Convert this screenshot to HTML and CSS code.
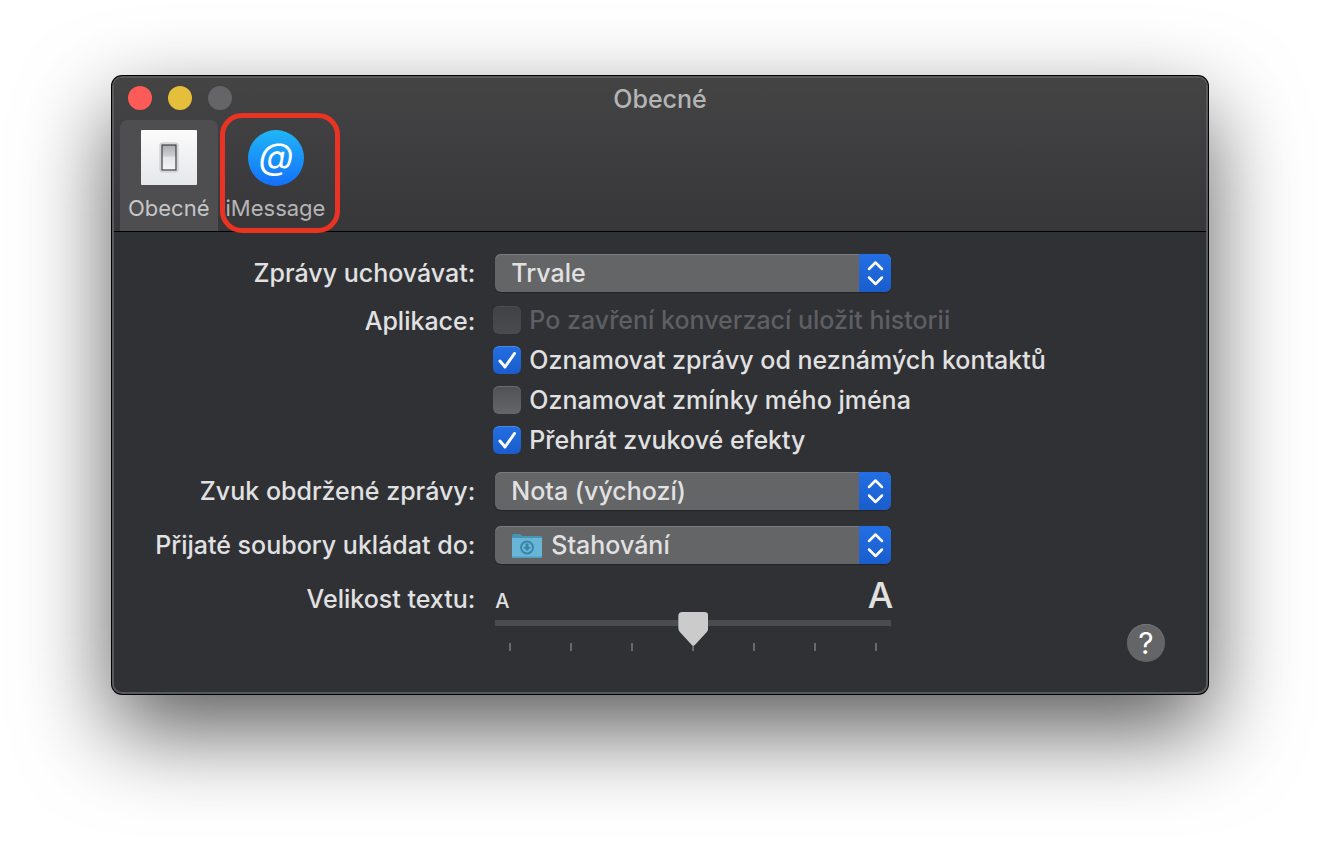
FILE: index.html
```
<!DOCTYPE html>
<html lang="cs">
<head>
    <meta charset="utf-8">
    <title>Obecné</title>
    <link rel="stylesheet" href="styles.css">
</head>
<body>
    <main class="window">
        <header class="toolbar">
            <div class="titlebar">
                <div class="lights">
                    <button class="light close" aria-label="Zavřít"></button>
                    <button class="light minimize" aria-label="Minimalizovat"></button>
                    <button class="light zoom" aria-label="Zvětšit" disabled></button>
                </div>
                <h1>Obecné</h1>
            </div>
            <nav class="tabs">
                <button class="tab active">
                    <svg width="58" height="58" viewBox="0 0 58 58">
                        <defs>
                            <linearGradient id="plate" x1="0" y1="0" x2="0" y2="1">
                                <stop offset="0" stop-color="#fbfbfb"/>
                                <stop offset="1" stop-color="#e6e7ea"/>
                            </linearGradient>
                            <linearGradient id="rocker" x1="0" y1="0" x2="0" y2="1">
                                <stop offset="0" stop-color="#a9abae"/>
                                <stop offset="0.45" stop-color="#cfd1d3"/>
                                <stop offset="0.5" stop-color="#e4e6e8"/>
                                <stop offset="1" stop-color="#f4f5f7"/>
                            </linearGradient>
                        </defs>
                        <rect x="1" y="1" width="56" height="55" rx="1" fill="url(#plate)"/>
                        <rect x="20" y="14" width="18" height="29" rx="2" fill="#e4e5e7" stroke="#c4c5c7"/>
                        <rect x="22" y="16" width="14" height="25" fill="url(#rocker)" stroke="#3d3d3f" stroke-width="1.2"/>
                    </svg>
                    <span>Obecné</span>
                </button>
                <button class="tab">
                    <svg width="58" height="58" viewBox="0 0 58 58">
                        <defs>
                            <linearGradient id="sky" x1="0" y1="0" x2="0" y2="1">
                                <stop offset="0" stop-color="#1fb6f6"/>
                                <stop offset="1" stop-color="#1470fb"/>
                            </linearGradient>
                        </defs>
                        <circle cx="30" cy="29" r="28" fill="url(#sky)"/>
                        <text class="at" x="30" y="40" text-anchor="middle">@</text>
                    </svg>
                    <span>iMessage</span>
                    <i class="highlight"></i>
                </button>
            </nav>
        </header>

        <form class="settings">
            <label for="keep">Zprávy uchovávat:</label>
            <div class="popup">
                <select id="keep"><option>Trvale</option></select>
                <svg class="arrows" width="32" height="38" viewBox="0 0 32 38"><path d="M10 15l6.500-6.500 6.500 6.500M10 23.500l6.500 6.500 6.500-6.500"/></svg>
            </div>

            <span class="caption" id="apps">Aplikace:</span>
            <div class="checks" role="group" aria-labelledby="apps">
                <label class="check disabled"><input type="checkbox" disabled>Po zavření konverzací uložit historii</label>
                <label class="check"><input type="checkbox" checked>Oznamovat zprávy od neznámých kontaktů</label>
                <label class="check"><input type="checkbox">Oznamovat zmínky mého jména</label>
                <label class="check"><input type="checkbox" checked>Přehrát zvukové efekty</label>
            </div>

            <label for="sound">Zvuk obdržené zprávy:</label>
            <div class="popup">
                <select id="sound"><option>Nota (výchozí)</option></select>
                <svg class="arrows" width="32" height="38" viewBox="0 0 32 38"><path d="M10 15l6.500-6.500 6.500 6.500M10 23.500l6.500 6.500 6.500-6.500"/></svg>
            </div>

            <label for="folder">Přijaté soubory ukládat do:</label>
            <div class="popup with-icon">
                <select id="folder"><option>Stahování</option></select>
                <svg class="folder" width="30" height="24" viewBox="0 0 30 24">
                    <path d="M0 1.500Q0 0 1.500 0H8l2.500 2H28.500Q30 2 30 3.500V12H0z" fill="#4695b5"/>
                    <path d="M0 4H30V22.500Q30 24 28.500 24H1.500Q0 24 0 22.500z" fill="#69b5d7"/>
                    <path d="M0 22.500H30Q30 24 28.500 24H1.500Q0 24 0 22.500z" fill="#4d9fc2"/>
                    <circle cx="15" cy="13.500" r="6" fill="none" stroke="#3984a5" stroke-width="1.800"/>
                    <path d="M13.500 9.500h3v3.500h2.500l-4 4-4-4h2.500z" fill="#3984a5"/>
                </svg>
                <svg class="arrows" width="32" height="38" viewBox="0 0 32 38"><path d="M10 15l6.500-6.500 6.500 6.500M10 23.500l6.500 6.500 6.500-6.500"/></svg>
            </div>

            <label for="size">Velikost textu:</label>
            <div class="slider">
                <div class="letters"><span>A</span><span class="big">A</span></div>
                <input type="range" id="size" min="0" max="6" value="3">
                <div class="ticks"><i></i><i></i><i></i><i></i><i></i><i></i><i></i></div>
            </div>
        </form>
        <button class="help" aria-label="Nápověda">?</button>
    </main>
</body>
</html>
```
FILE: styles.css
```
*{
    box-sizing: border-box;
}
body{
    min-height: 100vh;
    margin: 0;
    padding: 76px 112px;
    background: #fff;
    color: #e1e1e2;
    font-family: Inter, "Liberation Sans", sans-serif;
    font-size: 25px;
    font-weight: 500;
    line-height: 38px;
}
button, select, input{
    margin: 0;
    padding: 0;
    border: none;
    font: inherit;
    color: inherit;
}
.window{
    position: relative;
    padding-bottom: 41px;
    background: #303135;
    border: 2px solid #58595c;
    border-radius: 10px;
    box-shadow: 0 0 0 1px #000, 0 36px 90px rgba(0,0,0,0.65);
}

/* toolbar */
.toolbar{
    padding: 0 6px;
    background: linear-gradient(#444445, #37373a);
    border-bottom: 1px solid #000;
    border-radius: 8px 8px 0 0;
}
.titlebar{
    display: grid;
    grid-template-columns: 1fr auto 1fr;
    align-items: center;
    height: 42px;
}
.lights{
    display: flex;
    gap: 16px;
    padding: 0 0 2px 8px;
}
.light{
    width: 24px;
    height: 24px;
    border-radius: 50%;
}
.close{
    background: #fc5b57;
}
.minimize{
    background: #e5bf3c;
}
.zoom{
    background: #656567;
}
h1{
    margin: 0;
    font-size: 25px;
    font-weight: 500;
    color: #b5b5b6;
}
.tabs{
    display: flex;
}
.tab{
    position: relative;
    display: flex;
    flex-direction: column;
    align-items: center;
    height: 111px;
    padding: 9px 8px 0;
    background: none;
    border-radius: 8px 8px 0 0;
    color: #b5b5b6;
    font-size: 22px;
    font-weight: 400;
    line-height: 42px;
}
.tab.active{
    background: #4e4e51;
    color: #c6c6c7;
}
.tab svg{
    flex: none;
}
.at{
    font-size: 36px;
    font-style: italic;
    font-weight: 400;
    fill: #fff;
}
.highlight{
    position: absolute;
    top: -7px;
    left: 2px;
    width: 120px;
    height: 120px;
    border: 5px solid #ea3323;
    border-radius: 22px;
}

/* settings */
.settings{
    display: grid;
    grid-template-columns: 1fr 2fr;
    column-gap: 20px;
    row-gap: 16px;
    padding: 22px 0 0 6px;
}
.settings > label, .caption{
    text-align: right;
    white-space: nowrap;
}
.caption{
    margin-top: -2px;
    line-height: 30px;
}
.popup{
    position: relative;
    width: 396px;
    height: 38px;
}
.popup select{
    appearance: none;
    width: 100%;
    height: 38px;
    padding: 0 40px 0 16px;
    background: #646567;
    border-radius: 6px;
    box-shadow: inset 0 1px #7a7b7d, 0 1px 1px #232427;
}
.popup.with-icon select{
    padding-left: 56px;
}
.folder{
    position: absolute;
    top: 8px;
    left: 17px;
    pointer-events: none;
}
.arrows{
    position: absolute;
    top: 0;
    right: 0;
    background: linear-gradient(#236fe4, #1a5dcc);
    border-radius: 0 6px 6px 0;
    fill: none;
    stroke: #fff;
    stroke-width: 2.5;
    stroke-linecap: round;
    stroke-linejoin: round;
    pointer-events: none;
}
.checks{
    display: flex;
    flex-direction: column;
    gap: 12px;
    margin: -2px 0 2px -2px;
}
.check{
    display: flex;
    align-items: center;
    gap: 8px;
    height: 28px;
    line-height: 28px;
    white-space: nowrap;
}
.check.disabled{
    color: #5e5f62;
}
.check input{
    appearance: none;
    flex: none;
    width: 28px;
    height: 28px;
    background: linear-gradient(#505154, #656668);
    border-radius: 6px;
    box-shadow: inset 0 1px #6a6b6d;
}
.check.disabled input{
    background: linear-gradient(#414246, #4a4b4e);
    box-shadow: inset 0 1px #4a4b4e;
}
.check input:checked{
    background: url("data:image/svg+xml,%3Csvg xmlns='http://www.w3.org/2000/svg' viewBox='0 0 28 28'%3E%3Cpath d='M7 15l5 6L21.500 7.500' fill='none' stroke='%23fff' stroke-width='3' stroke-linecap='round' stroke-linejoin='round'/%3E%3C/svg%3E"), linear-gradient(#236fe4, #1a5dcc);
    box-shadow: inset 0 1px #4a88e8;
}
.slider{
    width: 398px;
}
.letters{
    display: flex;
    justify-content: space-between;
    align-items: baseline;
    height: 32px;
    font-size: 20px;
    line-height: 30px;
}
.letters .big{
    font-size: 36px;
}
.slider input{
    appearance: none;
    position: relative;
    display: block;
    width: 396px;
    height: 34px;
    background: none;
}
.slider input::-webkit-slider-runnable-track{
    height: 34px;
    background: linear-gradient(#4b4c4f, #4b4c4f) 0 8px / 100% 6px no-repeat;
}
.slider input::-webkit-slider-thumb{
    appearance: none;
    width: 30px;
    height: 34px;
    background: #cbcbcb;
    clip-path: path("M4 0H26Q30 0 30 4V16Q30 18 28.500 20L16.500 33Q15 34.500 13.500 33L1.500 20Q0 18 0 16V4Q0 0 4 0Z");
}
.ticks{
    display: flex;
    justify-content: space-between;
    margin-top: -3px;
    padding: 0 16px 0 14px;
}
.ticks i{
    width: 2px;
    height: 8px;
    background: #68696c;
}
.help{
    position: absolute;
    right: 41px;
    bottom: 30px;
    width: 38px;
    height: 38px;
    background: #646567;
    border-radius: 50%;
    box-shadow: inset 0 1px #747577;
    color: #fff;
    font-size: 30px;
    font-weight: 400;
    text-align: center;
}
```
